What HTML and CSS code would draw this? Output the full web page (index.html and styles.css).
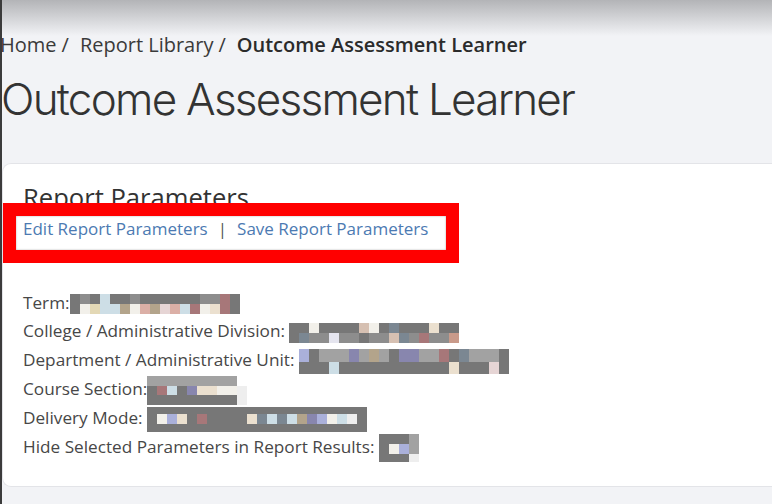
FILE: index.html
```html
<!DOCTYPE html>
<html lang="en">
<head>
<meta charset="utf-8">
<title>Outcome Assessment Learner</title>
<link rel="stylesheet" href="styles.css">
</head>
<body>
<div class="page">
  <nav class="crumbs">
    <span class="crumb">Home</span>
    <span class="crumb">Report Library</span>
    <span class="crumb current">Outcome Assessment Learner</span>
  </nav>
  <h1 class="title">Outcome Assessment Learner</h1>

  <section class="card">
    <h2 class="card-title">Report Parameters</h2>
    <div class="actions"><a href="#">Edit Report Parameters</a><span class="sep">|</span><a href="#">Save Report Parameters</a></div>

    <ul class="params">
      <li>Term:<span class="redact r10"><span class="row"><i class="a"></i><i class="b"></i><i class="a"></i><i class="u"></i><i class="a"></i><i class="a"></i><i class="b"></i><i class="a"></i><i class="a"></i><i class="a"></i><i class="a"></i><i class="a"></i><i class="a"></i><i class="b"></i><i class="b"></i><i class="m"></i><i class="a"></i></span><span class="row"><i class="a"></i><i class="w"></i><i class="y"></i><i class="u"></i><i class="u"></i><i class="t"></i><i class="w"></i><i class="p"></i><i class="t"></i><i class="q"></i><i class="p"></i><i class="u"></i><i class="m"></i><i class="w"></i><i class="e"></i><i class="m"></i><i class="a"></i></span></span></li>
      <li>College / Administrative Division: <span class="redact r10"><span class="row"><i class="a"></i><i class="a"></i><i class="w"></i><i class="a"></i><i class="a"></i><i class="a"></i><i class="a"></i><i class="r"></i><i class="w"></i><i class="a"></i><i class="s"></i><i class="a"></i><i class="a"></i><i class="a"></i><i class="e"></i><i class="a"></i><i class="a"></i></span><span class="row"><i class="a"></i><i class="s"></i><i class="b"></i><i class="b"></i><i class="l"></i><i class="b"></i><i class="b"></i><i class="a"></i><i class="b"></i><i class="b"></i><i class="r"></i><i class="s"></i><i class="b"></i><i class="m"></i><i class="b"></i><i class="b"></i><i class="o"></i></span></span></li>
      <li>Department / Administrative Unit: <span class="redact r-dept"><span class="row"><i class="v"></i><i class="a"></i><i class="c"></i><i class="c"></i><i class="c"></i><i class="n"></i><i class="c"></i><i class="t"></i><i class="c"></i><i class="a"></i><i class="n"></i><i class="n"></i><i class="c"></i><i class="c"></i><i class="m"></i><i class="a"></i><i class="s"></i><i class="c"></i><i class="c"></i><i class="c"></i><i class="a"></i></span><span class="row"><i class="a"></i><i class="a"></i><i class="a"></i><i class="u"></i><i class="a"></i><i class="a"></i><i class="a"></i><i class="a"></i><i class="a"></i><i class="a"></i><i class="a"></i><i class="a"></i><i class="a"></i><i class="a"></i><i class="a"></i><i class="e"></i><i class="a"></i><i class="a"></i><i class="a"></i><i class="q"></i><i class="a"></i></span></span></li>
      <li>Course Section:<span class="redact r-course"><span class="row"><i class="c"></i><i class="c"></i><i class="c"></i><i class="c"></i><i class="c"></i><i class="c"></i><i class="c"></i><i class="c"></i><i class="c"></i><i class="z"></i></span><span class="row"><i class="a"></i><i class="m"></i><i class="u"></i><i class="a"></i><i class="n"></i><i class="e"></i><i class="e"></i><i class="w"></i><i class="w"></i><i class="f"></i></span><span class="row"><i class="a"></i><i class="a"></i><i class="a"></i><i class="a"></i><i class="a"></i><i class="a"></i><i class="a"></i><i class="a"></i><i class="a"></i><i class="f"></i></span></span></li>
      <li>Delivery Mode: <span class="redact r-mode"><span class="row"><i class="a"></i><i class="a"></i><i class="a"></i><i class="a"></i><i class="a"></i><i class="a"></i><i class="a"></i><i class="a"></i><i class="a"></i><i class="a"></i><i class="a"></i><i class="a"></i><i class="a"></i><i class="a"></i><i class="a"></i><i class="a"></i><i class="a"></i><i class="a"></i><i class="a"></i><i class="a"></i><i class="a"></i><i class="a"></i></span><span class="row"><i class="a"></i><i class="w"></i><i class="v"></i><i class="e"></i><i class="a"></i><i class="m"></i><i class="a"></i><i class="a"></i><i class="a"></i><i class="a"></i><i class="e"></i><i class="s"></i><i class="u"></i><i class="s"></i><i class="u"></i><i class="t"></i><i class="n"></i><i class="v"></i><i class="w"></i><i class="u"></i><i class="f"></i><i class="a"></i></span><span class="row"><i class="a"></i><i class="a"></i><i class="a"></i><i class="a"></i><i class="a"></i><i class="a"></i><i class="a"></i><i class="a"></i><i class="a"></i><i class="a"></i><i class="a"></i><i class="a"></i><i class="a"></i><i class="a"></i><i class="a"></i><i class="a"></i><i class="a"></i><i class="a"></i><i class="a"></i><i class="a"></i><i class="a"></i><i class="a"></i></span></span></li>
      <li>Hide Selected Parameters in Report Results: <span class="redact r-hide"><span class="row"><i class="a"></i><i class="a"></i><i class="a"></i><i class="c"></i></span><span class="row"><i class="a"></i><i class="w"></i><i class="v"></i><i class="c"></i></span><span class="row"><i class="a"></i><i class="a"></i><i class="a"></i><i class="f"></i></span></span></li>
    </ul>

    <div class="highlight"></div>
  </section>
</div>
</body>
</html>
```

FILE: styles.css
```css
* { box-sizing: border-box; }

html, body { margin: 0; }

body {
  min-height: 504px;
  overflow: hidden;
  background: #f2f3f6 linear-gradient(#b3b4b7, #f2f3f6) no-repeat;
  background-size: 100% 36px;
  border-left: 2px solid #3b3b3b;
  font-family: "Open Sans", "Liberation Sans", sans-serif;
  color: #333;
}

.page { padding-top: 33px; }

/* breadcrumb */
.crumbs {
  display: flex;
  margin-left: -2px;
  font-size: 20px;
  line-height: 24px;
  color: #3a3a3a;
  white-space: nowrap;
}
.crumb::after {
  content: "/";
  margin: 0 11px 0 5px;
}
.crumb.current {
  font-weight: 600;
  color: #2b2b2b;
}
.crumb.current::after { content: none; }

/* page title */
.title {
  margin: 16px 0 0 -1px;
  font-family: Inter, "Open Sans", sans-serif;
  font-weight: 300;
  font-size: 44px;
  line-height: 52px;
  letter-spacing: -1.75px;
  color: #333;
  white-space: nowrap;
}

/* card */
.card {
  position: relative;
  margin-top: 38px;
  padding: 20px 0 25px 20px;
  background: #fff;
  border: 1px solid #e3e4e8;
  border-right: 0;
  border-radius: 9px 0 0 9px;
}

.card-title {
  margin: 0;
  font-size: 25.6px;
  font-weight: 400;
  line-height: 28.8px;
  color: #333;
}

.actions {
  margin-top: 2px;
  font-size: 17px;
  line-height: 28.8px;
  color: #4c7ab2;
}
.actions a {
  color: #4c7ab2;
  text-decoration: none;
}
.sep {
  margin: 0 10px;
  color: #555;
}

.params {
  list-style: none;
  margin: 45px 0 0;
  padding: 0;
  font-size: 17.2px;
  line-height: 28.8px;
  color: #474747;
}

/* pixelated redaction blocks */
.redact {
  display: inline-flex;
  flex-direction: column;
  vertical-align: middle;
  margin: -5px 0;
}
.redact .row { display: flex; }
.redact i { width: 10px; }

.r10 .row { height: 10px; }
.r-dept .row:first-child { height: 13px; }
.r-dept .row:last-child { height: 12px; }
.r-course .row { height: 10px; }
.r-course .row:nth-child(2) { height: 9px; }
.r-mode .row:first-child { height: 7px; }
.r-mode .row:nth-child(2) { height: 10px; }
.r-mode .row:last-child { height: 8px; }
.r-hide .row { height: 10px; }
.r-hide .row:last-child { height: 8px; }

.redact .a { background: #777777; }
.redact .b { background: #8d8d8d; }
.redact .c { background: #a2a2a2; }
.redact .w { background: #f2f0ea; }
.redact .u { background: #cddee6; }
.redact .t { background: #b3a48b; }
.redact .y { background: #e3d8b5; }
.redact .p { background: #dbafa6; }
.redact .q { background: #e6d5d5; }
.redact .m { background: #a77779; }
.redact .v { background: #aab0da; }
.redact .s { background: #7b8792; }
.redact .n { background: #8886ae; }
.redact .e { background: #ebe0cf; }
.redact .r { background: #d6c0b2; }
.redact .l { background: #e5e5ef; }
.redact .o { background: #c99a8a; }
.redact .f { background: #eeeeee; }
.redact .z { background: transparent; }

/* annotation overlay */
.highlight {
  position: absolute;
  left: 0;
  top: 39px;
  width: 456px;
  height: 60px;
  border: 13px solid #ff0000;
  box-shadow: inset 0 0 2px rgba(0, 0, 0, 0.35);
  pointer-events: none;
}
```
